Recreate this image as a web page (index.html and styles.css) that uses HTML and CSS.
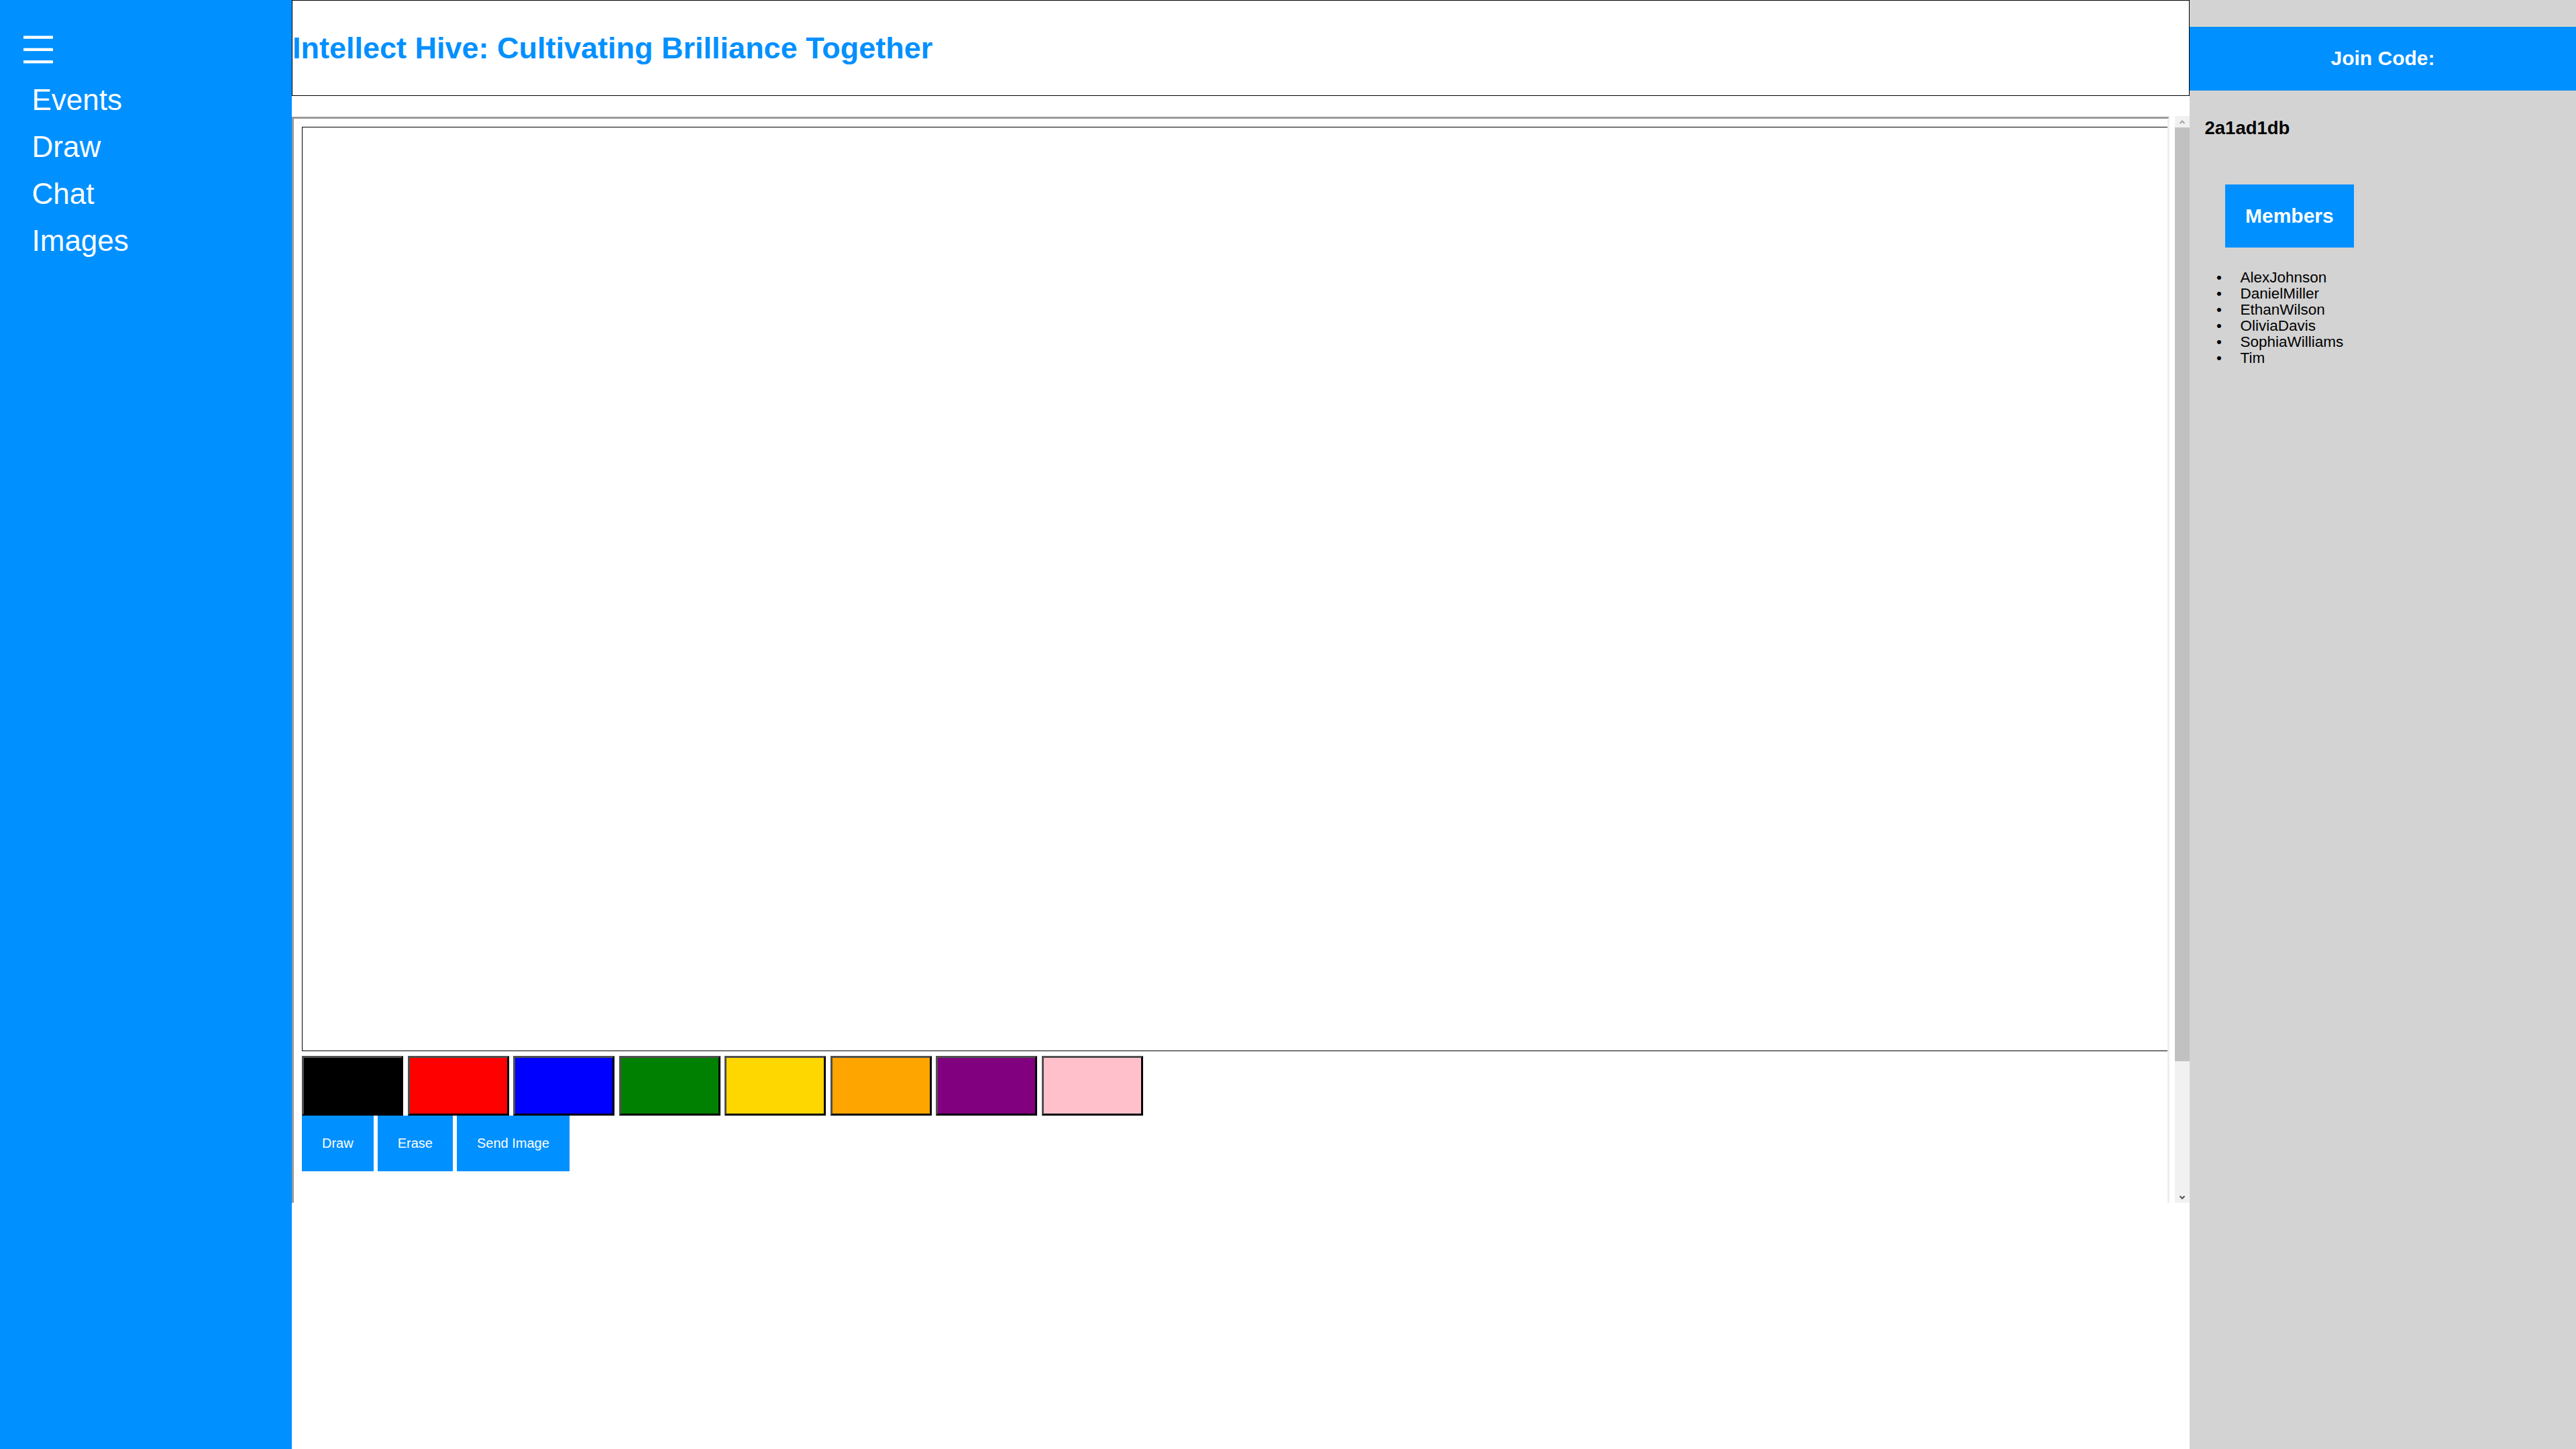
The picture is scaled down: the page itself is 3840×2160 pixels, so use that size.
FILE: index.html
```html
<!DOCTYPE html>
<html lang="en">
<head>
<meta charset="utf-8">
<title>Intellect Hive</title>
<link rel="stylesheet" href="styles.css">
</head>
<body>
<div class="app">
  <nav class="sidebar">
    <svg class="burger" width="44" height="42" viewBox="0 0 44 42" aria-hidden="true">
      <rect x="0" y="0.4" width="44" height="4.4" fill="#ffffff"/>
      <rect x="0" y="18.7" width="44" height="4.4" fill="#ffffff"/>
      <rect x="0" y="37" width="44" height="4.4" fill="#ffffff"/>
    </svg>
    <ul class="nav">
      <li class="nav-item">Events</li>
      <li class="nav-item">Draw</li>
      <li class="nav-item">Chat</li>
      <li class="nav-item">Images</li>
    </ul>
  </nav>

  <main class="main">
    <header class="header">
      <h1 class="title">Intellect Hive: Cultivating Brilliance Together</h1>
    </header>
    <div class="scroller">
      <div class="frame">
        <div class="canvas"></div>
        <div class="swatches">
          <div class="swatch sw-black"></div>
          <div class="swatch sw-red"></div>
          <div class="swatch sw-blue"></div>
          <div class="swatch sw-green"></div>
          <div class="swatch sw-gold"></div>
          <div class="swatch sw-orange"></div>
          <div class="swatch sw-purple"></div>
          <div class="swatch sw-pink"></div>
        </div>
        <div class="tools">
          <button class="tool">Draw</button>
          <button class="tool">Erase</button>
          <button class="tool">Send Image</button>
        </div>
      </div>
      <div class="scrollbar">
        <div class="sb-btn">
          <svg width="10" height="8" viewBox="0 0 10 8" aria-hidden="true"><polyline points="1.5,6 5,2.5 8.5,6" fill="none" stroke="#a3a3a3" stroke-width="2"/></svg>
        </div>
        <div class="sb-thumb"></div>
        <div class="sb-track"></div>
        <div class="sb-btn">
          <svg width="10" height="8" viewBox="0 0 10 8" aria-hidden="true"><polyline points="1.5,2 5,5.5 8.5,2" fill="none" stroke="#505050" stroke-width="2"/></svg>
        </div>
      </div>
    </div>
  </main>

  <aside class="panel">
    <div class="join">Join Code:</div>
    <div class="code">2a1ad1db</div>
    <div class="members">Members</div>
    <ul class="member-list">
      <li class="member">AlexJohnson</li>
      <li class="member">DanielMiller</li>
      <li class="member">EthanWilson</li>
      <li class="member">OliviaDavis</li>
      <li class="member">SophiaWilliams</li>
      <li class="member">Tim</li>
    </ul>
  </aside>
</div>
</body>
</html>
```

FILE: styles.css
```css
html, body {
  margin: 0;
  padding: 0;
}

body {
  font-family: "Liberation Sans", Arial, sans-serif;
  background: #ffffff;
}

.app {
  display: flex;
  width: 3840px;
  height: 2160px;
  overflow: hidden;
}

/* ---------- sidebar ---------- */
.sidebar {
  width: 435px;
  flex: none;
  background: #0090ff;
  padding-top: 53px;
  box-sizing: border-box;
}

.burger {
  display: block;
  margin-left: 35px;
}

.nav {
  list-style: none;
  margin: 18.6px 0 0 0;
  padding: 0 0 0 47.5px;
}

.nav-item {
  color: #ffffff;
  font-size: 44px;
  line-height: 70px;
}

/* ---------- main ---------- */
.main {
  width: 2829px;
  flex: none;
  background: #ffffff;
}

.header {
  height: 143px;
  box-sizing: border-box;
  border: 1px solid #000000;
  display: flex;
  align-items: center;
}

.title {
  margin: 0;
  font-size: 45px;
  font-weight: bold;
  color: #0090ff;
  line-height: normal;
}

.scroller {
  margin-top: 30px;
  height: 1620px;
  display: flex;
  align-items: flex-start;
  overflow: hidden;
}

.frame {
  width: 2799px;
  height: 1900px;
  flex: none;
  margin-top: 1px;
  box-sizing: border-box;
  border: 3px solid;
  border-color: #9a9a9a #eeeeee #eeeeee #9a9a9a;
  padding: 12px;
  overflow: hidden;
}

.canvas {
  width: 2900px;
  height: 1378px;
  box-sizing: border-box;
  border: 1px solid #000000;
  background: #ffffff;
  margin-bottom: 7px;
}

.swatches {
  display: flex;
  gap: 6.5px;
}

.swatch {
  width: 151px;
  height: 89px;
  box-sizing: border-box;
  border: 3px solid;
  border-color: #505050 #000000 #000000 #505050;
}

.sw-black  { background: #000000; }
.sw-red    { background: #ff0000; }
.sw-blue   { background: #0000ff; }
.sw-green  { background: #008000; }
.sw-gold   { background: #ffd700; }
.sw-orange { background: #ffa500; }
.sw-purple { background: #800080; }
.sw-pink   { background: #ffc0cb; }

.tools {
  display: flex;
  gap: 6px;
}

.tool {
  margin: 0;
  border: none;
  background: #0090ff;
  color: #ffffff;
  font-family: "Liberation Sans", Arial, sans-serif;
  font-size: 20px;
  line-height: 23px;
  padding: 30px;
}

/* fake classic scrollbar */
.scrollbar {
  width: 22px;
  height: 1620px;
  flex: none;
  margin-left: 8px;
  display: flex;
  flex-direction: column;
  background: #f1f1f1;
}

.sb-btn {
  height: 17px;
  flex: none;
  display: flex;
  align-items: center;
  justify-content: center;
  background: #f1f1f1;
}

.sb-btn svg {
  display: block;
}

.sb-thumb {
  height: 1392px;
  flex: none;
  background: #c1c1c1;
}

.sb-track {
  flex: 1;
  background: #f1f1f1;
}

/* ---------- right panel ---------- */
.panel {
  width: 576px;
  flex: none;
  background: #d3d3d3;
  padding-top: 40px;
  box-sizing: border-box;
}

.join {
  background: #0090ff;
  color: #ffffff;
  font-size: 30px;
  font-weight: bold;
  line-height: 34.5px;
  padding: 30px 0;
  text-align: center;
}

.code {
  margin-top: 40px;
  padding-left: 22.5px;
  font-size: 27.5px;
  font-weight: bold;
  line-height: 31px;
  color: #000000;
}

.members {
  margin-top: 69px;
  margin-left: 53px;
  width: fit-content;
  background: #0090ff;
  color: #ffffff;
  font-size: 30px;
  font-weight: bold;
  line-height: 34.5px;
  padding: 30px;
}

.member-list {
  margin: 33px 0 0 0;
  padding-left: 75.5px;
  font-size: 22.5px;
  line-height: 24px;
  color: #000000;
  list-style: none;
}

.member::before {
  content: "\2022";
  display: inline-block;
  width: 35.5px;
  margin-left: -35.5px;
}
```
